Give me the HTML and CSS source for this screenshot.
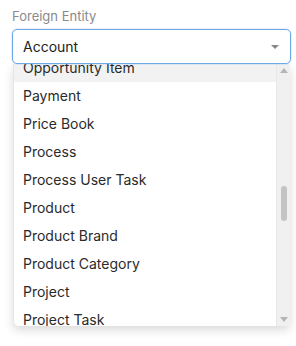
FILE: index.html
```html
<!DOCTYPE html>
<html>
<head>
<meta charset="utf-8">
<link rel="stylesheet" href="styles.css">
</head>
<body>
<div class="field">
  <div class="label">Foreign Entity</div>
  <div class="select">
    <div class="control">
      <span class="value">Account</span>
      <span class="caret"></span>
    </div>
    <div class="menu">
      <div class="viewport">
        <ul class="options">
          <li class="active">Opportunity Item</li>
          <li>Payment</li>
          <li>Price Book</li>
          <li>Process</li>
          <li>Process User Task</li>
          <li>Product</li>
          <li>Product Brand</li>
          <li>Product Category</li>
          <li>Project</li>
          <li>Project Task</li>
        </ul>
      </div>
      <div class="scrollbar">
        <span class="arrow up"></span>
        <div class="track"><div class="thumb"></div></div>
        <span class="arrow down"></span>
      </div>
    </div>
  </div>
</div>
</body>
</html>
```
FILE: styles.css
```css
html, body {
  margin: 0;
  padding: 0;
  background: #ffffff;
}
body {
  font-family: Inter, "Noto Sans", sans-serif;
  width: 296px;
  height: 346px;
  overflow: hidden;
}
.field {
  padding: 7px 5px 0 12px;
}
.label {
  font-size: 13px;
  line-height: 18px;
  color: #8a8a8a;
  margin-bottom: 4px;
}
.select {
  display: flex;
  flex-direction: column;
}
.control {
  position: relative;
  z-index: 2;
  height: 33px;
  border: 1px solid #6aa8e8;
  border-radius: 5px;
  background: #fff;
  display: flex;
  align-items: center;
  justify-content: space-between;
  padding: 0 11px 0 10px;
  box-shadow: 0 0 0 1px rgba(106,168,232,0.15);
}
.value {
  font-size: 14px;
  color: #222;
}
.caret {
  width: 0;
  height: 0;
  border-left: 4px solid transparent;
  border-right: 4px solid transparent;
  border-top: 4px solid #888;
}
.menu {
  display: flex;
  height: 262px;
  margin: 0 1px 0 1px;
  background: #fff;
  border-left: 1px solid #e6e6e6;
  border-radius: 0 0 5px 5px;
  overflow: hidden;
  box-shadow: 0 4px 10px rgba(0,0,0,0.15);
}
.viewport {
  flex: 1;
  overflow: hidden;
}
.options {
  list-style: none;
  margin: -10px 0 0 0;
  padding: 0;
}
.options li {
  height: 28px;
  line-height: 28px;
  padding-left: 9px;
  font-size: 14px;
  color: #2a2a2a;
}
.options li.active {
  background: #f2f2f2;
}
.scrollbar {
  width: 13px;
  background: #f0f0f0;
  border-left: 1px solid #e8e8e8;
  display: flex;
  flex-direction: column;
  align-items: center;
}
.arrow {
  width: 0;
  height: 0;
  border-left: 4px solid transparent;
  border-right: 4px solid transparent;
}
.arrow.up {
  border-bottom: 5px solid #b5b5b5;
  margin-top: 4px;
}
.arrow.down {
  border-top: 5px solid #b5b5b5;
  margin-bottom: 4px;
}
.track {
  flex: 1;
  width: 100%;
  display: flex;
  justify-content: center;
}
.thumb {
  width: 6px;
  height: 35px;
  margin-top: 113px;
  border-radius: 3px;
  background: #c4c4c4;
}
```
